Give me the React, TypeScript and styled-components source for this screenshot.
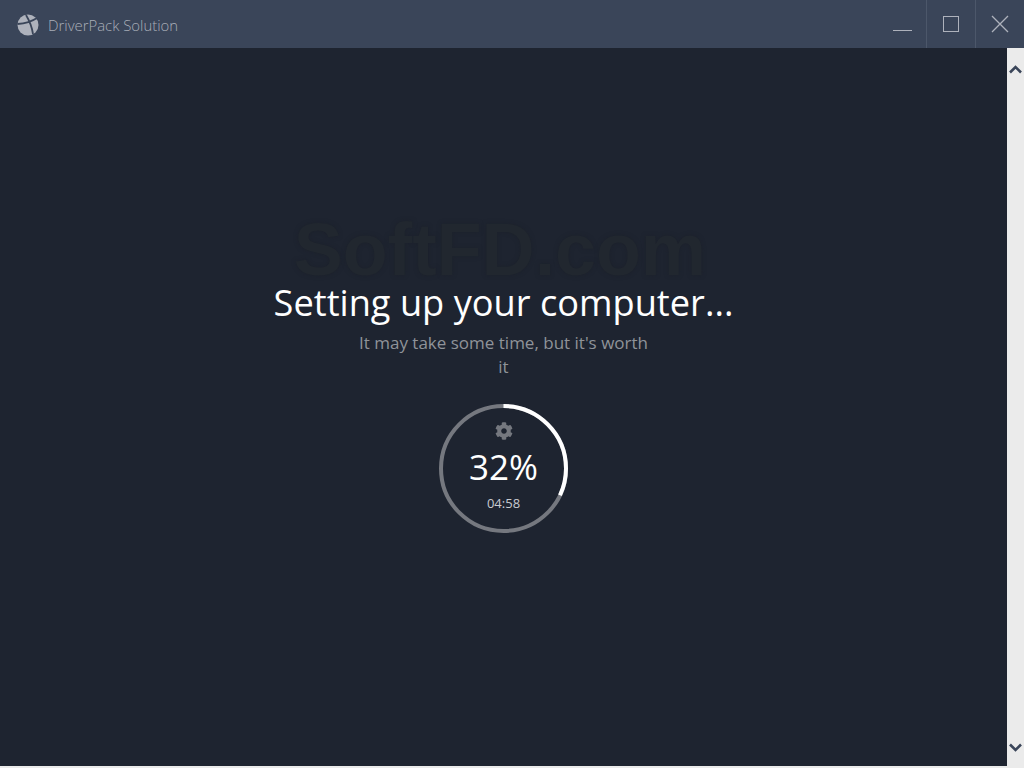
import React from "react";
import styled, { createGlobalStyle } from "styled-components";

const Global = createGlobalStyle`
  html, body { margin: 0; padding: 0; height: 100%; background: #ebebeb; overflow: hidden; }
  #root { height: 100%; }
`;
const Win = styled.div`
  width: 1024px; height: 768px; display: flex; flex-direction: column;
  font-family: "Open Sans", "Noto Sans", sans-serif;
`;
const TitleBar = styled.header`
  height: 48px; flex: none; background: #3a4559; display: flex; align-items: stretch;
`;
const Brand = styled.div`
  flex: 1; display: flex; align-items: center; gap: 9px; padding: 2px 0 0 17px;
  color: #a9aeb8; font-size: 14.9px; font-weight: 300;
`;
const WinButton = styled.button`
  width: 49px; padding: 0; background: transparent; border: 0;
  border-left: ${p => (p.$sep ? "1px solid #4c576a" : "0")};
  display: flex; align-items: center; justify-content: center;
`;
const Main = styled.div`
  flex: 1; min-height: 0; display: flex; padding-bottom: 2px;
`;
const Content = styled.main`
  position: relative; flex: 1; background: #1e2430; color: #fff;
  display: flex; flex-direction: column; align-items: center; padding-top: 229px;
`;
const Watermark = styled.div`
  position: absolute; top: 157px; left: 0; right: 7px; text-align: center;
  font-family: "Liberation Sans", sans-serif; font-weight: 700; font-size: 73.5px; line-height: 90px;
  color: #21272f; text-shadow: 0 0 4px #1c212b;
`;
const Title = styled.h1`
  position: relative; margin: 0; font-weight: 400; font-size: 36.2px; line-height: 50px; color: #fff;
`;
const Sub = styled.p`
  position: relative; margin: 4px 0 0; width: 300px; text-align: center; font-size: 17px; line-height: 24px; color: #8f9399;
`;
const Ring = styled.div`
  position: relative; margin-top: 25px; width: 129px; height: 129px;
  display: flex; flex-direction: column; align-items: center;
`;
const RingSvg = styled.svg`
  position: absolute; inset: 0;
`;
const Gear = styled.svg`
  margin-top: 18px;
`;
const Percent = styled.div`
  font-size: 35px; font-weight: 400; line-height: 46px; margin-top: 4px; color: #fff;
`;
const Time = styled.div`
  font-size: 13px; line-height: 18px; margin-top: 4px; color: #c8cbd0;
`;
const Scrollbar = styled.aside`
  width: 17px; flex: none; background: #ebebeb; display: flex; flex-direction: column;
  justify-content: space-between; align-items: center; padding: 16px 0 13px; box-sizing: border-box;
`;

const pct = 0.32;
const R = 62.5;
const C = 2 * Math.PI * R;

export default function App() {
  return (
    <Win>
      <Global />
      <TitleBar>
        <Brand>
          <svg width="22" height="22" viewBox="0 0 22 22">
            <circle cx="11" cy="11" r="10.5" fill="#aeb2bc" />
            <path d="M0.5 10 C 7 9.5, 14 8, 20 4 M9 1 C 12 6, 15 13, 16 20" fill="none" stroke="#3a4559" strokeWidth="1.8" />
          </svg>
          DriverPack Solution
        </Brand>
        <WinButton aria-label="Minimize">
          <svg width="20" height="20" viewBox="0 0 20 20" style={{ marginLeft: 2 }}>
            <path d="M0 16.5 H19" stroke="#aeb2bc" strokeWidth="1" />
          </svg>
        </WinButton>
        <WinButton $sep aria-label="Maximize">
          <svg width="18" height="18" viewBox="0 0 18 18">
            <rect x="1.5" y="1.5" width="15" height="15" fill="none" stroke="#aeb2bc" strokeWidth="1" />
          </svg>
        </WinButton>
        <WinButton $sep aria-label="Close">
          <svg width="18" height="18" viewBox="0 0 18 18">
            <path d="M1 1 L17 17 M17 1 L1 17" stroke="#aeb2bc" strokeWidth="1.3" />
          </svg>
        </WinButton>
      </TitleBar>
      <Main>
        <Content>
          <Watermark>SoftFD.com</Watermark>
          <Title>Setting up your computer...</Title>
          <Sub>It may take some time, but it's worth it</Sub>
          <Ring>
            <RingSvg width="129" height="129" viewBox="0 0 129 129">
              <circle cx="64.5" cy="64.5" r={R} fill="none" stroke="#75787f" strokeWidth="4" />
              <circle cx="64.5" cy="64.5" r={R} fill="none" stroke="#fff" strokeWidth="4"
                strokeDasharray={`${C * pct} ${C}`} transform="rotate(-90 64.5 64.5)" />
            </RingSvg>
            <Gear width="18" height="18" viewBox="0 0 512 512">
              <path fill="#75787f" d="M487.4 315.7l-42.6-24.6c4.3-23.2 4.3-47 0-70.2l42.6-24.6c4.9-2.8 7.1-8.6 5.5-14-11.1-35.6-30-67.8-54.7-94.6-3.8-4.1-10-5.1-14.8-2.3L380.8 110c-17.9-15.4-38.5-27.3-60.8-35.1V25.8c0-5.6-3.9-10.5-9.4-11.7-36.7-8.2-74.3-7.8-109.2 0-5.5 1.2-9.4 6.1-9.4 11.7V75c-22.2 7.9-42.8 19.8-60.8 35.1L88.7 85.5c-4.9-2.8-11-1.9-14.8 2.3-24.7 26.7-43.6 58.9-54.7 94.6-1.7 5.4.6 11.2 5.5 14L67.3 221c-4.3 23.2-4.3 47 0 70.2l-42.6 24.6c-4.9 2.8-7.1 8.6-5.5 14 11.1 35.6 30 67.8 54.7 94.6 3.8 4.1 10 5.1 14.8 2.3l42.6-24.6c17.9 15.4 38.5 27.3 60.8 35.1v49.2c0 5.6 3.9 10.5 9.4 11.7 36.7 8.2 74.3 7.8 109.2 0 5.5-1.2 9.4-6.1 9.4-11.7v-49.2c22.2-7.9 42.8-19.8 60.8-35.1l42.6 24.6c4.9 2.8 11 1.9 14.8-2.3 24.7-26.7 43.6-58.9 54.7-94.6 1.5-5.5-.7-11.3-5.6-14.1zM256 336c-44.1 0-80-35.9-80-80s35.9-80 80-80 80 35.9 80 80-35.9 80-80 80z" />
            </Gear>
            <Percent>32%</Percent>
            <Time>04:58</Time>
          </Ring>
        </Content>
        <Scrollbar>
          <svg width="13" height="10" viewBox="0 0 13 10"><path d="M1 8.5 L6.5 3 L12 8.5" fill="none" stroke="#3a4559" strokeWidth="2.6" /></svg>
          <svg width="13" height="10" viewBox="0 0 13 10"><path d="M1 1.5 L6.5 7 L12 1.5" fill="none" stroke="#3a4559" strokeWidth="2.6" /></svg>
        </Scrollbar>
      </Main>
    </Win>
  );
}
